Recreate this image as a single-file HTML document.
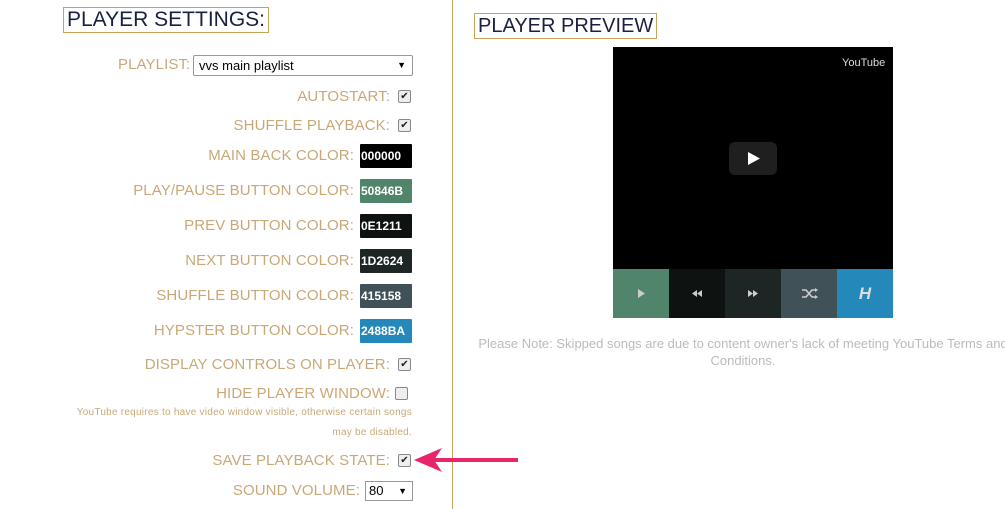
<!DOCTYPE html><html><head><style>
body{margin:0;width:1005px;height:509px;background:#fff;position:relative;overflow:hidden;font-family:"Liberation Sans",sans-serif}
.a{position:absolute}
.l{position:absolute;right:615px;color:#c9a877;font-size:15px;letter-spacing:0.1px;white-space:nowrap;font-weight:300}
.lc{right:651px}
.cb{position:absolute;left:398px;width:11px;height:11px;border:1px solid #888;border-radius:2px;background:#eee;font-size:10px;line-height:11px;text-align:center;color:#222}
.sw{position:absolute;left:360px;width:52px;height:24px;color:#fff;font-weight:bold;font-size:12px;line-height:24px;text-indent:1px;border-radius:1px}
.h{position:absolute;border:1px solid #c9a35a;color:#1a2040;font-size:21px;letter-spacing:0;padding:0 3px;line-height:24px;font-weight:300}
.btn{position:absolute;top:269px;width:56px;height:49px;color:#ccc;font-size:11px;text-align:center;line-height:49px}
</style></head><body>
<div class="h" style="left:63px;top:7px">PLAYER SETTINGS:</div>
<div class="a" style="left:452px;top:0;width:1px;height:509px;background:#c9a35a"></div>
<div class="l" style="top:56px;left:118px;right:auto">PLAYLIST:</div>
<div class="a" style="left:193px;top:55px;width:218px;height:19px;border:1px solid #999;border-radius:2px;font-size:13px;line-height:19px;color:#000;text-indent:5px">vvs main playlist<span style="position:absolute;right:6px;font-size:9px">▼</span></div>
<div class="l" style="top:88px">AUTOSTART:</div><div class="cb" style="top:90px">✔</div>
<div class="l" style="top:117px">SHUFFLE PLAYBACK:</div><div class="cb" style="top:119px">✔</div>
<div class="l lc" style="top:147px">MAIN BACK COLOR:</div><div class="sw" style="top:144px;background:#000">000000</div>
<div class="l lc" style="top:182px">PLAY/PAUSE BUTTON COLOR:</div><div class="sw" style="top:179px;background:#50846B">50846B</div>
<div class="l lc" style="top:217px">PREV BUTTON COLOR:</div><div class="sw" style="top:214px;background:#0E1211">0E1211</div>
<div class="l lc" style="top:252px">NEXT BUTTON COLOR:</div><div class="sw" style="top:249px;background:#1D2624">1D2624</div>
<div class="l lc" style="top:287px">SHUFFLE BUTTON COLOR:</div><div class="sw" style="top:284px;background:#415158">415158</div>
<div class="l lc" style="top:322px">HYPSTER BUTTON COLOR:</div><div class="sw" style="top:319px;background:#2488BA">2488BA</div>
<div class="l" style="top:356px">DISPLAY CONTROLS ON PLAYER:</div><div class="cb" style="top:358px">✔</div>
<div class="l" style="top:385px">HIDE PLAYER WINDOW:</div><div class="cb" style="top:387px;left:395px"></div>
<div class="a" style="right:593px;top:403px;font-size:10px;color:#c9a877;text-align:right;line-height:20px;width:360px;letter-spacing:0.25px">YouTube requires to have video window visible, otherwise certain songs<br>may be disabled.</div>
<div class="l" style="top:452px">SAVE PLAYBACK STATE:</div><div class="cb" style="top:454px">✔</div>
<div class="l" style="top:482px;right:645px">SOUND VOLUME:</div>
<div class="a" style="left:365px;top:481px;width:46px;height:18px;border:1px solid #999;font-size:13px;line-height:18px;text-indent:3px">80<span style="position:absolute;right:5px;font-size:9px">▼</span></div>
<svg class="a" style="left:412px;top:446px" width="108" height="28"><line x1="20" y1="14" x2="106" y2="14" stroke="#e8246b" stroke-width="4"/><polygon points="2,14 30,2 22,14 30,26" fill="#e8246b"/></svg>
<div class="h" style="left:474px;top:13px;font-size:20px">PLAYER PREVIEW</div>
<div class="a" style="left:613px;top:47px;width:280px;height:222px;background:#000"></div>
<div class="a" style="left:842px;top:57px;color:#ddd;font-size:11px">YouTube</div>
<div class="a" style="left:729px;top:142px;width:48px;height:33px;background:#1f1f1f;border-radius:6px"></div>
<svg class="a" style="left:747px;top:151px" width="14" height="15"><polygon points="1,1 13,7.5 1,14" fill="#fff"/></svg>
<svg class="btn" style="left:613px;background:#50846B" width="56" height="49"><polygon points="25,20 32,24.5 25,29" fill="#ccc"/></svg>
<svg class="btn" style="left:669px;background:#0E1211" width="56" height="49"><polygon points="28,21 28,28 23,24.5" fill="#ccc"/><polygon points="33,21 33,28 28,24.5" fill="#ccc"/></svg>
<svg class="btn" style="left:725px;background:#1D2624" width="56" height="49"><polygon points="23,21 23,28 28,24.5" fill="#ccc"/><polygon points="28,21 28,28 33,24.5" fill="#ccc"/></svg>
<svg class="btn" style="left:781px;background:#415158" width="56" height="49"><path d="M21,21 h4 l6,7 h4 M21,28 h4 l6,-7 h4" stroke="#ccc" stroke-width="1.6" fill="none"/><polygon points="34,19 37,21 34,23" fill="#ccc"/><polygon points="34,26 37,28 34,30" fill="#ccc"/></svg>
<div class="btn" style="left:837px;background:#2488BA;font-size:17px;font-weight:bold;font-style:italic;color:#ddd">H</div>
<div class="a" style="left:478px;top:335px;width:530px;text-align:center;color:#bbb;font-size:13px;line-height:17px;font-weight:300">Please Note: Skipped songs are due to content owner's lack of meeting YouTube Terms and<br>Conditions.</div>
</body></html>
